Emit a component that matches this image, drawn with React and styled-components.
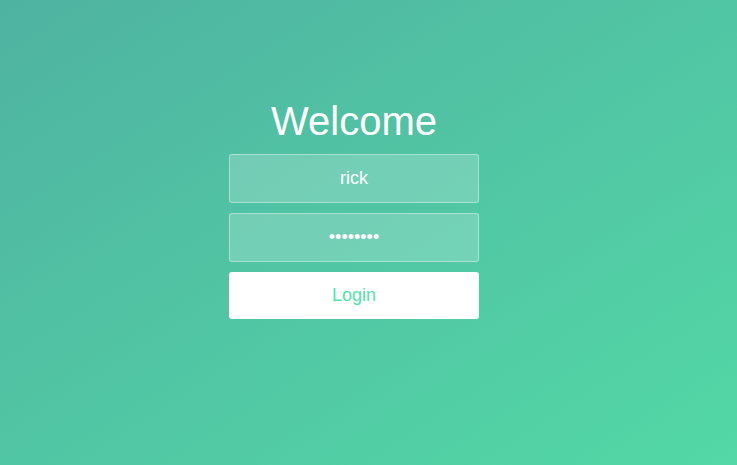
import styled, { createGlobalStyle } from "styled-components";

const GlobalStyle = createGlobalStyle`
  html, body {
    margin: 0;
    padding: 0;
  }
  body {
    font-family: "Liberation Sans", Arial, sans-serif;
  }
`;

export default function App() {
  return (
    <>
      <GlobalStyle />
      <Page>
        <Container>
          <Title>Welcome</Title>
          <Form onSubmit={(e) => e.preventDefault()}>
            <Input type="text" placeholder="Username" defaultValue="rick" />
            <Input type="password" placeholder="Password" defaultValue="password" />
            <Button type="submit">Login</Button>
          </Form>
        </Container>
      </Page>
    </>
  );
}

const Page = styled.div`
  width: 100%;
  height: 465px;
  overflow: hidden;
  background: linear-gradient(to bottom right, #4fb3a1 0%, #53d8a6 100%);
  display: flex;
  padding-left: 229px;
  box-sizing: border-box;
`;
const Container = styled.div`
  width: 250px;
  padding-top: 98px;
  display: flex;
  flex-direction: column;
  align-items: center;
`;
const Title = styled.h1`
  margin: 0 0 10px;
  font-size: 40px;
  line-height: 46px;
  font-weight: 200;
  color: #ffffff;
  white-space: nowrap;
`;
const Form = styled.form`
  display: flex;
  flex-direction: column;
  gap: 10px;
  width: 250px;
`;
const Input = styled.input`
  appearance: none;
  outline: 0;
  box-sizing: border-box;
  width: 250px;
  height: 49px;
  margin: 0;
  padding: 0 15px;
  border: 1px solid rgba(255, 255, 255, 0.4);
  border-radius: 3px;
  background-color: rgba(255, 255, 255, 0.2);
  text-align: center;
  font-family: "Liberation Sans", Arial, sans-serif;
  font-size: 18px;
  font-weight: 300;
  color: #ffffff;
`;
const Button = styled.button`
  appearance: none;
  outline: 0;
  box-sizing: border-box;
  width: 250px;
  height: 47px;
  padding: 0 15px;
  border: 0;
  border-radius: 3px;
  background-color: #ffffff;
  color: #53e3a6;
  font-family: "Liberation Sans", Arial, sans-serif;
  font-size: 18px;
  cursor: pointer;
`;
